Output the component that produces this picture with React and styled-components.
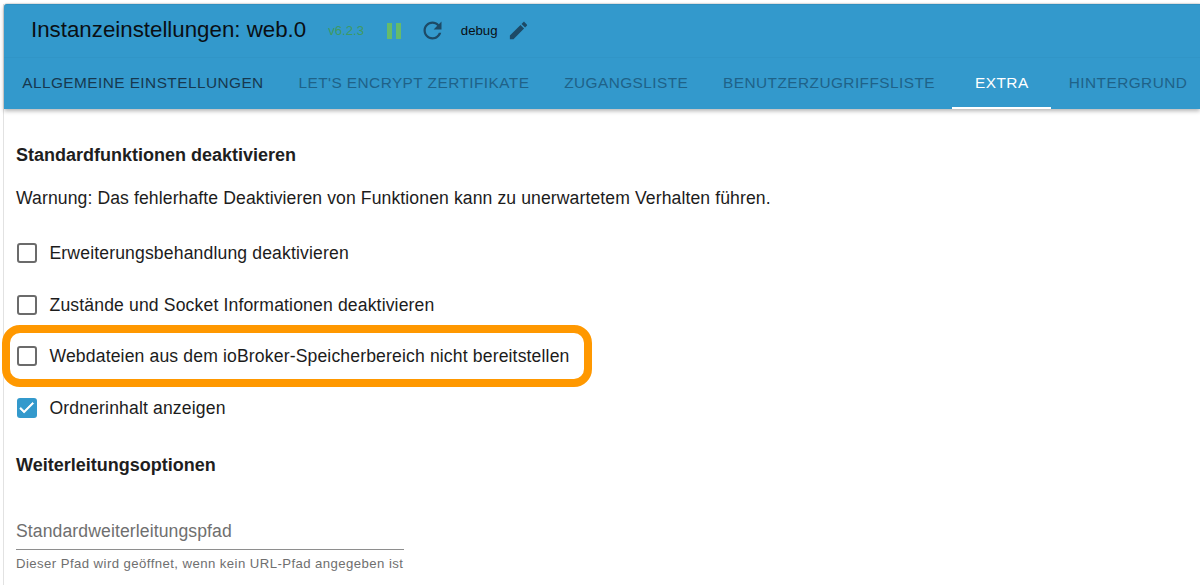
import React from "react";
import styled, { createGlobalStyle } from "styled-components";

const GlobalStyle = createGlobalStyle`
	html, body {
		margin: 0;
		padding: 0;
		height: 585px;
		overflow: hidden;
		background: #fff;
		font-family: "Liberation Sans", Arial, sans-serif;
	}
`;

const Page = styled.div`
	width: 1200px;
	height: 585px;
	overflow: hidden;
	box-sizing: border-box;
	padding: 4px 0 0 4px;
	background: #fff;
`;

const Frame = styled.div`
	height: 581px;
	border-left: 1px solid #e2e2e2;
	margin-left: -1px;
`;

const Header = styled.header`
	background: #3399cc;
	border-top: 1px solid #2f8fc0;
	border-radius: 3px 0 0 0;
	box-shadow: 0 2px 4px rgba(0, 0, 0, 0.3), 0 -1px 1px rgba(0, 0, 0, 0.1);
`;

const TitleRow = styled.div`
	height: 52px;
	display: flex;
	align-items: center;
	padding: 0 0 1px 27px;
	box-sizing: border-box;
`;

const Title = styled.h1`
	margin: 0 0 1px;
	font-size: 22.3px;
	font-weight: 400;
	color: #0a0f14;
`;

const Version = styled.span`
	margin-left: 22px;
	font-size: 13.2px;
	color: #3f9a63;
`;

const PauseIcon = styled.span`
	margin-left: 23px;
	display: flex;
	gap: 4.5px;
	& i {
		display: block;
		width: 4.6px;
		height: 16px;
		background: #66bb6a;
	}
`;

const IconSvg = styled.svg`
	width: ${(p) => p.$size}px;
	height: ${(p) => p.$size}px;
	margin-left: ${(p) => p.$left}px;
	fill: ${(p) => p.$color};
	flex: none;
`;

const LogLevel = styled.span`
	margin-left: 15px;
	font-size: 13.2px;
	color: #0a0f14;
`;

const Tabs = styled.nav`
	height: 52px;
	display: flex;
	padding-left: 0.8px;
	border-top: 1px solid rgba(0, 0, 0, 0.025);
	box-sizing: border-box;
	overflow: hidden;
`;

const Tab = styled.div`
	position: relative;
	flex: none;
	min-width: 99px;
	box-sizing: border-box;
	padding: 0 17.4px 2px;
	display: flex;
	align-items: center;
	justify-content: center;
	font-size: 15.4px;
	letter-spacing: 0.44px;
	text-transform: uppercase;
	white-space: nowrap;
	color: ${(p) => (p.$active ? "#ffffff" : p.$current ? "#17384f" : "#1f6288")};
	${(p) =>
		p.$active &&
		`
		&::after {
			content: "";
			position: absolute;
			left: 0;
			right: 0;
			bottom: 0;
			height: 2px;
			background: #fff;
		}
	`}
`;

const Content = styled.main`
	padding: 0 0 0 12px;
	color: #1c1c1c;
`;

const SectionTitle = styled.h2`
	margin: ${(p) => p.$top}px 0 0;
	font-size: 18px;
	line-height: 20px;
	font-weight: 700;
	color: #1e1e1e;
`;

const Warning = styled.p`
	margin: 23px 0 0;
	font-size: 17.6px;
	line-height: 20px;
	letter-spacing: 0.1px;
`;

const Options = styled.div`
	margin-top: 35px;
	display: flex;
	flex-direction: column;
	gap: 31.5px;
`;

const Option = styled.label`
	position: relative;
	height: 20px;
	display: flex;
	align-items: center;
	gap: 13px;
	font-size: 17.6px;
	line-height: 20px;
	letter-spacing: 0.14px;
	${(p) =>
		p.$highlight &&
		`
		&::after {
			content: "";
			position: absolute;
			left: -14px;
			top: -21px;
			width: 574px;
			height: 46px;
			border: 8px solid #ff9800;
			border-radius: 18px;
		}
	`}
`;

const Box = styled.span`
	width: 20px;
	height: 20px;
	box-sizing: border-box;
	border-radius: 3px;
	flex: none;
	display: flex;
	align-items: center;
	justify-content: center;
	margin-left: 0.5px;
	background: ${(p) => (p.$checked ? "#3399cc" : "transparent")};
	border: ${(p) => (p.$checked ? "none" : "2px solid #6b6b6b")};
`;

const CheckMark = styled.svg`
	width: 19px;
	height: 19px;
	fill: #fff;
	stroke: #fff;
	stroke-width: 1;
`;

const PathField = styled.div`
	margin-top: 46px;
	width: 388px;
`;

const FieldLabel = styled.div`
	font-size: 17.6px;
	line-height: 20px;
	color: #6f6f6f;
	padding-bottom: 8px;
	border-bottom: 1px solid #8e8e8e;
	letter-spacing: 0.1px;
`;

const HelperText = styled.div`
	margin-top: 6px;
	font-size: 13.2px;
	line-height: 15px;
	letter-spacing: 0.42px;
	color: #6f6f6f;
	white-space: nowrap;
`;

const tabs = [
	{ label: "Allgemeine Einstellungen", current: true },
	{ label: "Let's Encrypt Zertifikate" },
	{ label: "Zugangsliste" },
	{ label: "Benutzerzugriffsliste" },
	{ label: "Extra", active: true },
	{ label: "Hintergrund" },
];

const options = [
	{ label: "Erweiterungsbehandlung deaktivieren" },
	{ label: "Zustände und Socket Informationen deaktivieren" },
	{ label: "Webdateien aus dem ioBroker-Speicherbereich nicht bereitstellen", highlight: true },
	{ label: "Ordnerinhalt anzeigen", checked: true },
];

export default function App() {
	return (
		<Page>
			<GlobalStyle />
			<Frame>
				<Header>
					<TitleRow>
						<Title>Instanzeinstellungen: web.0</Title>
						<Version>v6.2.3</Version>
						<PauseIcon>
							<i />
							<i />
						</PauseIcon>
						<IconSvg viewBox="0 0 24 24" $size={27} $left={18} $color="#1d4a66">
							<path d="M17.65 6.35C16.2 4.9 14.21 4 12 4c-4.42 0-7.99 3.58-7.99 8s3.57 8 7.99 8c3.73 0 6.84-2.55 7.73-6h-2.08c-.82 2.33-3.04 4-5.65 4-3.31 0-6-2.69-6-6s2.69-6 6-6c1.66 0 3.14.69 4.22 1.78L13 11h7V4l-2.35 2.35z" />
						</IconSvg>
						<LogLevel>debug</LogLevel>
						<IconSvg viewBox="0 0 24 24" $size={23} $left={10} $color="#1d4a66">
							<path d="M3 17.25V21h3.75L17.81 9.94l-3.75-3.75L3 17.25zM20.71 7.04c.39-.39.39-1.02 0-1.41l-2.34-2.34c-.39-.39-1.02-.39-1.41 0l-1.83 1.83 3.75 3.75 1.83-1.83z" />
						</IconSvg>
					</TitleRow>
					<Tabs>
						{tabs.map((tab) => (
							<Tab key={tab.label} $active={tab.active} $current={tab.current}>
								{tab.label}
							</Tab>
						))}
					</Tabs>
				</Header>
				<Content>
					<SectionTitle $top={36}>Standardfunktionen deaktivieren</SectionTitle>
					<Warning>Warnung: Das fehlerhafte Deaktivieren von Funktionen kann zu unerwartetem Verhalten führen.</Warning>
					<Options>
						{options.map((option) => (
							<Option key={option.label} $highlight={option.highlight}>
								<Box $checked={option.checked}>
									{option.checked && (
										<CheckMark viewBox="0 0 24 24">
											<path d="M9 16.17 4.83 12l-1.42 1.41L9 19 21 7l-1.41-1.41z" />
										</CheckMark>
									)}
								</Box>
								{option.label}
							</Option>
						))}
					</Options>
					<SectionTitle $top={37}>Weiterleitungsoptionen</SectionTitle>
					<PathField>
						<FieldLabel>Standardweiterleitungspfad</FieldLabel>
						<HelperText>Dieser Pfad wird geöffnet, wenn kein URL-Pfad angegeben ist</HelperText>
					</PathField>
				</Content>
			</Frame>
		</Page>
	);
}
